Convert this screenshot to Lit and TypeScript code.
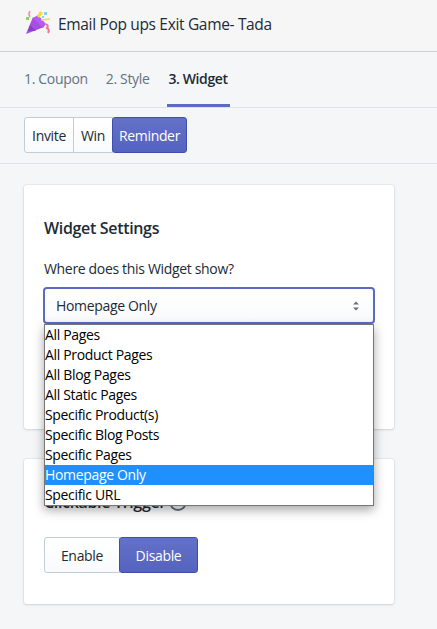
import { LitElement, html, css } from "lit";
import { customElement } from "lit/decorators.js";

const OPTIONS = ["All Pages","All Product Pages","All Blog Pages","All Static Pages","Specific Product(s)","Specific Blog Posts","Specific Pages","Homepage Only","Specific URL"];

@customElement("app-root")
export class AppRoot extends LitElement {
  static styles = css`
    :host { display:block; width:437px; height:629px; overflow:hidden; background:#f4f6f8; color:#212b36;
      font-family:"Open Sans","Noto Sans",sans-serif; font-size:14px; letter-spacing:-0.33px; box-sizing:border-box; }
    * { box-sizing:border-box; }
    .header { height:52px; background:#f6f6f7; border-bottom:1px solid #cfd1d3; display:flex; align-items:center; padding:0 24px 3px 25px; gap:7px; font-size:15.5px; }
    .logo { width:26px; height:26px; flex:none; margin-bottom:3px; }
    .tabs { height:56px; display:flex; padding:0 24px; gap:0; border-bottom:1px solid #dfe3e8; }
    .tab { height:55px; padding:0; margin-right:18px; display:flex; align-items:center; color:#637381; border-bottom:3px solid transparent; padding-top:1px; }
    .tab.on { color:#212b36; font-weight:600; border-bottom-color:#5c6ac4; padding:1px 0 0; margin-left:-1px; width:63px; justify-content:center; letter-spacing:-0.4px; }
    .bar { height:56px; border-bottom:1px solid #dfe3e8; padding:9px 24px 0; display:flex; }
    .btn { height:36px; padding:0 8px; display:flex; align-items:center; justify-content:center; background:linear-gradient(#fff,#f9fafb); border:1px solid #c4cdd5; color:#212b36; }
    .btn.primary { background:linear-gradient(#6371c7,#5563c1); border-color:#3f4eae; color:#fff; border-radius:3px; }
    .bar .btn:first-child { border-radius:3px 0 0 3px; width:50px; }
    .bar .btn:nth-child(2) { margin-left:-1px; width:40px; }
    .bar .btn.primary { margin-left:-1px; width:75px; }
    .content { padding:21px 43px 0 24px; display:flex; flex-direction:column; gap:30px; }
    .card { background:#fff; border-radius:3px; box-shadow:0 0 0 1px rgba(63,63,68,.05),0 1px 3px rgba(63,63,68,.15); padding:20px; position:relative; }
    .one { height:244px; }
    .two { height:145px; }
    h2 { margin:0; font-size:16px; font-weight:600; line-height:24px; display:flex; align-items:center; gap:3px; }
    .one h2 { margin-top:11px; }
    .label { margin-top:19px; line-height:20px; }
    .select { position:relative; margin:8px -1px 0; height:37px; border:2px solid #5c6ac4; border-radius:4px; background:linear-gradient(#fff,#f9fafb); display:flex; align-items:center; justify-content:space-between; padding:0 13px 0 11px; }
    .popup { position:absolute; left:20px; top:139px; width:330px; background:#fff; border:1px solid #767676; box-shadow:0 4px 10px rgba(0,0,0,.35); z-index:5; }
    .opt { height:20px; line-height:20px; padding-left:0; color:#000; }
    .opt.on { background:#1e90ff; color:#fff; }
    .two h2 { margin-top:11px; }
    .info { width:18px; height:18px; }
    .pair { display:flex; margin-top:23px; }
    .pair .btn:first-child { width:76px; border-radius:3px 0 0 3px; }
    .pair .btn.primary { width:79px; margin-left:-1px; }
  `;
  render() {
    return html`
      <div class="header">
        <svg class="logo" viewBox="0 0 26 26">
          <path d="M1 24 L8 7 L19 17 Z" fill="#a64fe0"/>
          <path d="M3 21 L5 15 L11 21 Z" fill="#8b3fc8"/>
          <path d="M8 8 L13 5 L21 14 L18 18 Z" fill="#b45cf0"/>
          <path d="M5 1 Q3 4 5 7" stroke="#f48fb1" stroke-width="1.6" fill="none"/>
          <path d="M12 6 L15 1 L18 3 L14 8Z" fill="#fdd835"/>
          <rect x="19" y="2" width="3" height="3" fill="#7fd6f5"/><rect x="17" y="6" width="2" height="2" fill="#7fd6f5"/>
          <path d="M16 10 L25 9" stroke="#fdd835" stroke-width="1.6"/>
          <rect x="1" y="7" width="3" height="3" fill="#8bd65a"/>
          <path d="M21 14 q3 2 1 4 q3 2 1 5" stroke="#f06f92" stroke-width="2" fill="none"/>
        </svg>
        <span>Email Pop ups Exit Game- Tada</span>
      </div>
      <div class="tabs">
        <div class="tab">1. Coupon</div>
        <div class="tab">2. Style</div>
        <div class="tab on">3. Widget</div>
      </div>
      <div class="bar">
        <div class="btn">Invite</div><div class="btn">Win</div><div class="btn primary">Reminder</div>
      </div>
      <div class="content">
        <div class="card one">
          <h2>Widget Settings</h2>
          <div class="label">Where does this Widget show?</div>
          <div class="select"><span>Homepage Only</span>
            <svg width="8" height="12" viewBox="0 0 8 12"><path d="M4 1.5L7 4.5H1Z M4 10.5L1 7.5H7Z" fill="#637381"/></svg>
          </div>
          <div class="popup">
            ${OPTIONS.map(o => html`<div class="opt ${o === "Homepage Only" ? "on" : ""}">${o}</div>`)}
          </div>
        </div>
        <div class="card two">
          <h2>Clickable Trigger
            <svg class="info" viewBox="0 0 18 18"><circle cx="9" cy="9" r="8" fill="none" stroke="#637381" stroke-width="2"/><rect x="8" y="8" width="2" height="5" fill="#637381"/><rect x="8" y="5" width="2" height="2" fill="#637381"/></svg>
          </h2>
          <div class="pair"><div class="btn">Enable</div><div class="btn primary">Disable</div></div>
        </div>
      </div>
    `;
  }
}
